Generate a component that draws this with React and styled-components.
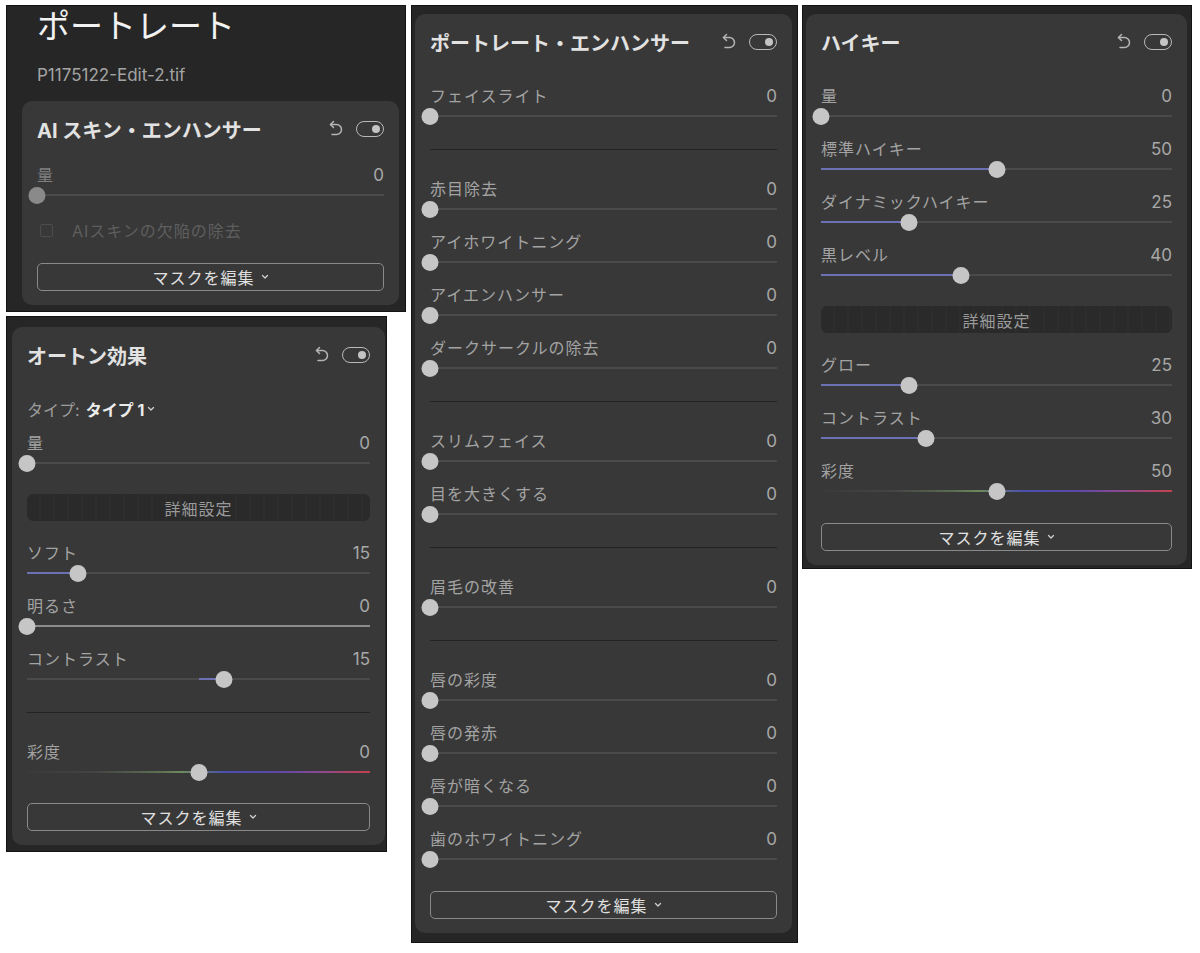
import React from 'react';
import styled, { createGlobalStyle } from 'styled-components';

const GlobalStyle = createGlobalStyle`
  body {
    margin: 0;
    background: #ffffff;
    font-family: "Inter", "Noto Sans CJK JP", sans-serif;
  }
`;

const Page = styled.div`
  display: flex;
  align-items: flex-start;
  gap: 4px;
  padding: 5px 0 0 6px;
`;

const LeftColumn = styled.div`
  display: flex;
  flex-direction: column;
  align-items: flex-start;
  gap: 4px;
  margin-right: 1px;
`;

const Frame = styled.section`
  box-sizing: border-box;
  width: ${(p) => p.$w}px;
  padding: ${(p) => p.$pad};
  background: #262626;
  border: 1px solid #131313;
`;

const PageTitle = styled.h1`
  margin: 0 0 17px 15px;
  font-size: 33px;
  line-height: 40px;
  font-weight: 400;
  color: #f2f2f2;
`;

const FileName = styled.div`
  margin: 0 0 14px 15px;
  font-size: 17px;
  line-height: 24px;
  color: #a4a4a4;
`;

const Card = styled.div`
  background: #383838;
  border-radius: 10px;
  padding: 14px 15px 14px;
`;

const Header = styled.div`
  display: flex;
  align-items: center;
  justify-content: space-between;
  height: 28px;
  margin-bottom: ${(p) => p.$gap}px;
`;

const Title = styled.h2`
  margin: 0;
  font-size: 20px;
  font-weight: 700;
  color: #e2e2e2;
  white-space: nowrap;
`;

const HeaderIcons = styled.div`
  display: flex;
  align-items: center;
  gap: 13px;
`;

const Toggle = styled.span`
  position: relative;
  box-sizing: border-box;
  width: 28px;
  height: 16px;
  border: 1.5px solid #b8b8b8;
  border-radius: 8px;

  &::after {
    content: '';
    position: absolute;
    right: 3px;
    top: 2.5px;
    width: 8px;
    height: 8px;
    border-radius: 50%;
    background: #c4c4c4;
  }
`;

const Row = styled.div`
  margin-bottom: 13px;
`;

const LabelLine = styled.div`
  display: flex;
  justify-content: space-between;
  height: 20px;
  line-height: 20px;
  font-size: 16px;
  letter-spacing: 1px;
  color: ${(p) => (p.$dim ? '#808080' : '#a3a3a3')};
`;

const Value = styled.span`
  font-size: 17px;
  letter-spacing: 0;
  color: #a8a8a8;
`;

const Track = styled.div`
  position: relative;
  height: 20px;
`;

const railBg = {
  normal: '#4a4a4a',
  light: '#8c8c8c',
  gradient:
    'linear-gradient(90deg, #3a3a3a 0%, #444 20%, #5c6e52 38%, #6d8a5c 45%, #4b4fb0 58%, #5a48a8 72%, #8a4a92 85%, #c4404c 100%)',
};

const Rail = styled.div`
  position: absolute;
  top: 9px;
  left: 0;
  right: 0;
  height: 2px;
  background: ${(p) => railBg[p.$variant]};
`;

const Fill = styled.div`
  position: absolute;
  top: 9px;
  height: 2px;
  background: #6c71b4;
`;

const Thumb = styled.div`
  position: absolute;
  top: 1.5px;
  width: 17px;
  height: 17px;
  border-radius: 50%;
  background: ${(p) => (p.$dim ? '#8a8a8a' : '#c6c6c6')};
  transform: translateX(-50%);
`;

const Divider = styled.div`
  height: 1px;
  background: #232323;
  margin: 23px 0 29px;
`;

const DetailBar = styled.div`
  height: 27px;
  margin: 21px 0 22px;
  border-radius: 6px;
  background: repeating-linear-gradient(90deg, #2a2a2a 0 12px, #2d2d2d 12px 14px);
  display: flex;
  align-items: center;
  justify-content: center;
  font-size: 16px;
  letter-spacing: 1px;
  color: #9a9a9a;
`;

const MaskButton = styled.button`
  box-sizing: border-box;
  width: 100%;
  height: 28px;
  margin-top: ${(p) => p.$gap}px;
  display: flex;
  align-items: center;
  justify-content: center;
  gap: 6px;
  background: transparent;
  border: 1px solid #8a8a8a;
  border-radius: 5px;
  font-family: inherit;
  font-size: 16px;
  letter-spacing: 1px;
  color: #e0e0e0;
`;

const TypeLine = styled.div`
  display: flex;
  align-items: center;
  height: 20px;
  margin-bottom: 14px;
  font-size: 16px;
  color: #9c9c9c;
`;

const TypeValue = styled.span`
  margin-left: 6px;
  margin-right: 3px;
  font-weight: 700;
  color: #ececec;
`;

const CheckLine = styled.div`
  display: flex;
  align-items: center;
  height: 20px;
  margin-top: 15px;
  font-size: 16px;
  letter-spacing: 1px;
  color: #5e5e5e;
`;

const CheckBox = styled.span`
  box-sizing: border-box;
  width: 13px;
  height: 13px;
  margin: 0 19px 0 3px;
  border: 1px solid #4c4c4c;
  border-radius: 2px;
`;

const UndoIcon = () => (
  <svg width="15" height="18" viewBox="0 0 15 18" fill="none" stroke="#b4b4b4" strokeWidth="1.5" strokeLinecap="round" strokeLinejoin="round">
    <path d="M5.5 1.5 L2.5 4.5 L5.5 7.5" />
    <path d="M2.5 4.5 H8.5 a5 5 0 0 1 0 10 H4" />
  </svg>
);

const Chevron = () => (
  <svg width="8" height="6" viewBox="0 0 8 6" fill="none" stroke="#cfcfcf" strokeWidth="1.3" strokeLinecap="round" strokeLinejoin="round">
    <path d="M1.5 1.5 L4 4 L6.5 1.5" />
  </svg>
);

const PanelHeader = ({ title, gap }) => (
  <Header $gap={gap}>
    <Title>{title}</Title>
    <HeaderIcons>
      <UndoIcon />
      <Toggle />
    </HeaderIcons>
  </Header>
);

// pos: thumb place 0..1, from: where the blue fill starts (null for none)
const Slider = ({ label, value, pos = 0, from = null, variant = 'normal', dim }) => {
  const start = from === null ? null : Math.min(from, pos);
  const width = from === null ? 0 : Math.abs(pos - from);
  return (
    <Row>
      <LabelLine $dim={dim}>
        <span>{label}</span>
        <Value>{value}</Value>
      </LabelLine>
      <Track>
        <Rail $variant={variant} />
        {width > 0 && <Fill style={{ left: `${start * 100}%`, width: `${width * 100}%` }} />}
        <Thumb $dim={dim} style={{ left: `${pos * 100}%` }} />
      </Track>
    </Row>
  );
};

const Mask = ({ gap }) => (
  <MaskButton $gap={gap}>
    マスクを編集
    <Chevron />
  </MaskButton>
);

const enhancerGroups = [
  [['フェイスライト', 0]],
  [['赤目除去', 0], ['アイホワイトニング', 0], ['アイエンハンサー', 0], ['ダークサークルの除去', 0]],
  [['スリムフェイス', 0], ['目を大きくする', 0]],
  [['眉毛の改善', 0]],
  [['唇の彩度', 0], ['唇の発赤', 0], ['唇が暗くなる', 0], ['歯のホワイトニング', 0]],
];

const App = () => {
  return (
    <>
      <GlobalStyle />
      <Page>
        <LeftColumn>
          <Frame $w={400} $pad="0 6px 6px 15px">
            <PageTitle>ポートレート</PageTitle>
            <FileName>P1175122-Edit-2.tif</FileName>
            <Card>
              <PanelHeader title="AI スキン・エンハンサー" gap={22} />
              <Slider label="量" value={0} dim />
              <CheckLine>
                <CheckBox />
                AIスキンの欠陥の除去
              </CheckLine>
              <Mask gap={23} />
            </Card>
          </Frame>

          <Frame $w={381} $pad="10px 1px 6px 5px">
            <Card>
              <PanelHeader title="オートン効果" gap={30} />
              <TypeLine>
                タイプ:
                <TypeValue>タイプ 1</TypeValue>
                <Chevron />
              </TypeLine>
              <Slider label="量" value={0} />
              <DetailBar>詳細設定</DetailBar>
              <Slider label="ソフト" value={15} pos={0.15} from={0} />
              <Slider label="明るさ" value={0} variant="light" />
              <Slider label="コントラスト" value={15} pos={0.575} from={0.5} />
              <Divider />
              <Slider label="彩度" value={0} pos={0.5} variant="gradient" />
              <Mask gap={21} />
            </Card>
          </Frame>
        </LeftColumn>

        <Frame $w={387} $pad="8px 5px 9px 3px">
          <Card>
            <PanelHeader title="ポートレート・エンハンサー" gap={30} />
            {enhancerGroups.map((group, i) => (
              <React.Fragment key={i}>
                {i > 0 && <Divider />}
                {group.map(([label, value]) => (
                  <Slider key={label} label={label} value={value} />
                ))}
              </React.Fragment>
            ))}
            <Mask gap={22} />
          </Card>
        </Frame>

        <Frame $w={390} $pad="8px 4px 3px 3px">
          <Card>
            <PanelHeader title="ハイキー" gap={30} />
            <Slider label="量" value={0} />
            <Slider label="標準ハイキー" value={50} pos={0.5} from={0} />
            <Slider label="ダイナミックハイキー" value={25} pos={0.25} from={0} />
            <Slider label="黒レベル" value={40} pos={0.4} from={0} />
            <DetailBar>詳細設定</DetailBar>
            <Slider label="グロー" value={25} pos={0.25} from={0} />
            <Slider label="コントラスト" value={30} pos={0.3} from={0} />
            <Slider label="彩度" value={50} pos={0.5} variant="gradient" />
            <Mask gap={22} />
          </Card>
        </Frame>
      </Page>
    </>
  );
};

export default App;
